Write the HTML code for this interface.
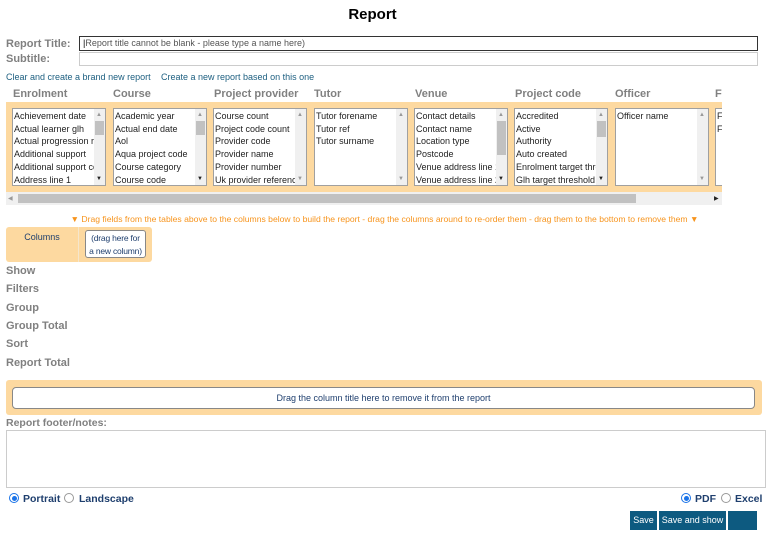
<!DOCTYPE html>
<html><head><meta charset="utf-8"><style>
*{box-sizing:border-box;margin:0;padding:0}
body{width:769px;height:540px;background:#fff;font-family:"Liberation Sans",Arial,sans-serif;position:relative;overflow:hidden}
.a{position:absolute}
.lbl{color:#808080;font-weight:bold;font-size:11px}
.hd{color:#808080;font-weight:bold;font-size:11px;top:88px}
.lb{position:absolute;top:108px;width:94px;height:78px;border:1px solid #a0a0a0;background:#fff;overflow:hidden;font-size:9px;color:#222;line-height:12.7px;padding:1px 0 0 1px;white-space:nowrap}
.sb{position:absolute;right:0;top:0;width:11px;height:100%;background:#f0f0f0}
.th{position:absolute;left:1px;width:9px;background:#c1c1c1}
.up,.dn{position:absolute;left:2px;font-size:6px;color:#999;line-height:6px}
.up{top:3px}.dn{bottom:3px;color:#222}
.btn{position:absolute;top:511px;height:19px;background:#0d5a80;color:#fff;font-size:9px;line-height:19px;text-align:center}
.rad{position:absolute;width:10px;height:10px;border-radius:50%;border:1px solid #999;background:#fff}
.rad.on{border:1px solid #1a73e8;}
.rad.on:after{content:"";position:absolute;left:1.5px;top:1.5px;width:5px;height:5px;border-radius:50%;background:#1a73e8}
.rt{position:absolute;top:493px;font-size:10.5px;font-weight:bold;color:#1f3f6e}
</style></head><body>
<div class="a" style="left:0;width:745px;top:6px;text-align:center;font-size:15px;font-weight:bold;color:#000">Report</div>
<div class="a lbl" style="left:6px;top:38px">Report Title:</div>
<div class="a lbl" style="left:6px;top:53px">Subtitle:</div>
<div class="a" style="left:79px;top:36px;width:679px;height:15px;border:1px solid #333;font-size:9px;color:#555;line-height:13px;padding-left:3px"><span style="color:#000">|</span>Report title cannot be blank - please type a name here)</div>
<div class="a" style="left:79px;top:52px;width:679px;height:14px;border:1px solid #ccc"></div>
<div class="a" style="left:6px;top:72px;font-size:9px;color:#1d5f80">Clear and create a brand new report</div>
<div class="a" style="left:161px;top:72px;font-size:9px;color:#1d5f80">Create a new report based on this one</div>
<div class="a hd" style="left:13px">Enrolment</div>
<div class="a hd" style="left:113px">Course</div>
<div class="a hd" style="left:214px">Project provider</div>
<div class="a hd" style="left:314px">Tutor</div>
<div class="a hd" style="left:415px">Venue</div>
<div class="a hd" style="left:515px">Project code</div>
<div class="a hd" style="left:615px">Officer</div>
<div class="a hd" style="left:715px;width:7px;overflow:hidden">Fu</div>
<div class="a" style="left:6px;top:102px;width:716px;height:90px;background:#fdd9a0;overflow:hidden">
<div class="lb" style="left:6px;top:6px">Achievement date<br>Actual learner glh<br>Actual progression ro<br>Additional support<br>Additional support co<br>Address line 1<div class="sb"><div class="up">▲</div><div class="th" style="top:12px;height:14px"></div><div class="dn">▼</div></div></div>
<div class="lb" style="left:107px;top:6px">Academic year<br>Actual end date<br>Aol<br>Aqua project code<br>Course category<br>Course code<div class="sb"><div class="up">▲</div><div class="th" style="top:12px;height:14px"></div><div class="dn">▼</div></div></div>
<div class="lb" style="left:207px;top:6px">Course count<br>Project code count<br>Provider code<br>Provider name<br>Provider number<br>Uk provider reference<div class="sb"><div class="up">▲</div><div class="dn" style="color:#999">▼</div></div></div>
<div class="lb" style="left:308px;top:6px">Tutor forename<br>Tutor ref<br>Tutor surname<div class="sb"><div class="up">▲</div><div class="dn" style="color:#999">▼</div></div></div>
<div class="lb" style="left:408px;top:6px">Contact details<br>Contact name<br>Location type<br>Postcode<br>Venue address line 1<br>Venue address line 2<div class="sb"><div class="up">▲</div><div class="th" style="top:12px;height:34px"></div><div class="dn">▼</div></div></div>
<div class="lb" style="left:508px;top:6px">Accredited<br>Active<br>Authority<br>Auto created<br>Enrolment target thre<br>Glh target threshold a<div class="sb"><div class="up">▲</div><div class="th" style="top:12px;height:16px"></div><div class="dn">▼</div></div></div>
<div class="lb" style="left:609px;top:6px">Officer name<div class="sb"><div class="up">▲</div><div class="dn" style="color:#999">▼</div></div></div>
<div class="lb" style="left:709px;top:6px">Fu<br>Fu</div>
</div>
<div class="a" style="left:6px;top:192px;width:716px;height:13px;background:#f0f0f0"><div class="a" style="left:12px;top:2px;width:618px;height:9px;background:#c1c1c1"></div><div class="a" style="left:2px;top:3px;font-size:6px;color:#999">◀</div><div class="a" style="left:708px;top:3px;font-size:6px;color:#222">▶</div></div>
<div class="a" style="left:0;width:769px;top:214px;text-align:center;font-size:8.6px;color:#f7941d;white-space:nowrap">▼ Drag fields from the tables above to the columns below to build the report - drag the columns around to re-order them - drag them to the bottom to remove them ▼</div>
<div class="a" style="left:6px;top:227px;width:146px;height:35px;background:#fdd9a0;border-radius:3px"></div>
<div class="a" style="left:78px;top:227px;width:1px;height:35px;background:#f5e6cc"></div>
<div class="a" style="left:6px;top:232px;width:72px;text-align:center;font-size:9px;color:#1f3f6e">Columns</div>
<div class="a" style="left:85px;top:230px;width:61px;height:28px;background:#fff;border:1px solid #888;border-radius:3px;font-size:8.5px;color:#1f3f6e;line-height:12.5px;text-align:center;padding-top:1px;white-space:nowrap;letter-spacing:-0.2px">(drag here for<br>a new column)</div>
<div class="a lbl" style="left:6px;top:265px">Show</div>
<div class="a lbl" style="left:6px;top:283px">Filters</div>
<div class="a lbl" style="left:6px;top:302px">Group</div>
<div class="a lbl" style="left:6px;top:320px">Group Total</div>
<div class="a lbl" style="left:6px;top:338px">Sort</div>
<div class="a lbl" style="left:6px;top:357px">Report Total</div>
<div class="a" style="left:6px;top:380px;width:756px;height:35px;background:#fdd9a0;border-radius:3px"></div>
<div class="a" style="left:12px;top:387px;width:743px;height:22px;background:#fff;border:1px solid #888;border-radius:4px;font-size:9px;color:#1f3f6e;line-height:20px;text-align:center">Drag the column title here to remove it from the report</div>
<div class="a lbl" style="left:6px;top:417px;font-size:10.5px">Report footer/notes:</div>
<div class="a" style="left:6px;top:430px;width:760px;height:58px;border:1px solid #ccc"></div>
<div class="rad on" style="left:9px;top:493px"></div><div class="rt" style="left:23px">Portrait</div>
<div class="rad" style="left:64px;top:493px"></div><div class="rt" style="left:79px">Landscape</div>
<div class="rad on" style="left:681px;top:493px"></div><div class="rt" style="left:695px">PDF</div>
<div class="rad" style="left:721px;top:493px"></div><div class="rt" style="left:735px">Excel</div>
<div class="btn" style="left:630px;width:27px">Save</div>
<div class="btn" style="left:659px;width:67px">Save and show</div>
<div class="btn" style="left:728px;width:29px"></div>
</body></html>
